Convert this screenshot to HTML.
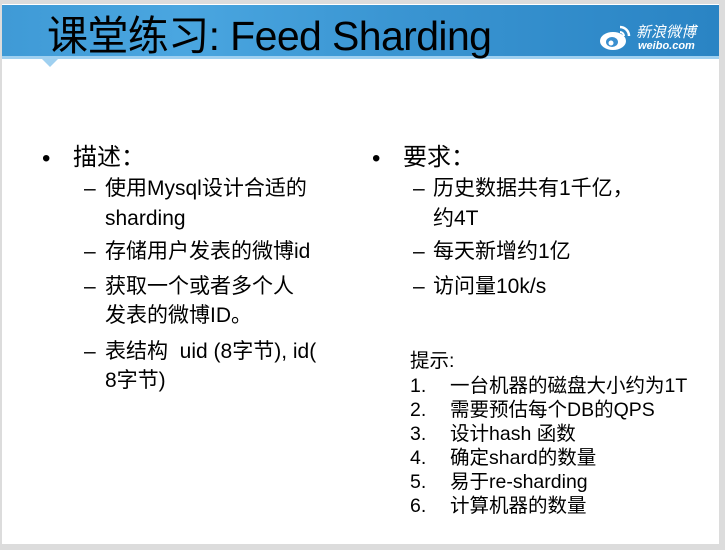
<!DOCTYPE html>
<html><head><meta charset="utf-8"><style>
body{margin:0;width:725px;height:550px;background:#dcdcdc;position:relative;overflow:hidden;font-family:"Liberation Sans","Noto Sans CJK SC",sans-serif;color:#000}
#slide{position:absolute;left:2px;top:4px;width:717px;height:540px;background:#fff}
#hdr{position:absolute;left:0;top:1px;width:717px;height:51px;background:linear-gradient(90deg,#3f9ad6 0%,#4aa6e0 25%,#3a95d2 55%,#2a84c4 100%)}
#line{position:absolute;left:0;top:52px;width:717px;height:3px;background:#9fd0f0}
#notch{position:absolute;left:40px;top:55px;width:0;height:0;border-left:8px solid transparent;border-right:8px solid transparent;border-top:8px solid #9fd0f0}
.t{position:absolute;white-space:nowrap;line-height:1}
#title{left:45px;top:12px;font-size:41px;font-family:"Liberation Sans","WenQuanYi Zen Hei",sans-serif;letter-spacing:-0.6px}
.b{font-size:24px}
.s{font-size:21px}
.h{font-size:19.5px}
</style></head><body>
<div id="slide">
<div id="hdr"></div><div id="line"></div><div id="notch"></div>
<div class="t" id="title">课堂练习: Feed Sharding</div>
<svg class="t" style="left:596px;top:18px" width="36" height="30" viewBox="0 0 36 30"><ellipse cx="15" cy="19" rx="13" ry="9" fill="#fff"/><ellipse cx="14" cy="20" rx="6" ry="5" fill="#3a8fcf"/><circle cx="13" cy="21" r="2.5" fill="#fff"/><path d="M22 5a9 9 0 0 1 9 9" stroke="#fff" stroke-width="2.5" fill="none"/><path d="M22 10a4 4 0 0 1 4 4" stroke="#fff" stroke-width="2" fill="none"/></svg>
<div class="t" style="left:634px;top:21px;color:#fff;font-size:15px;font-style:italic">新浪微博</div>
<div class="t" style="left:636px;top:37px;color:#fff;font-size:11px;font-style:italic;font-weight:bold">weibo.com</div>

<div class="t b" style="left:40px;top:143px">•</div>
<div class="t b" style="left:71px;top:142px">描述：</div>
<div class="t s" style="left:82px;top:174px">–</div><div class="t s" style="left:103px;top:174px">使用Mysql设计合适的</div>
<div class="t s" style="left:103px;top:204px">sharding</div>
<div class="t s" style="left:82px;top:237px">–</div><div class="t s" style="left:103px;top:237px">存储用户发表的微博id</div>
<div class="t s" style="left:82px;top:272px">–</div><div class="t s" style="left:103px;top:272px">获取一个或者多个人</div>
<div class="t s" style="left:103px;top:301px">发表的微博ID。</div>
<div class="t s" style="left:82px;top:337px">–</div><div class="t s" style="left:103px;top:337px">表结构&nbsp; uid (8字节), id(</div>
<div class="t s" style="left:103px;top:366px">8字节)</div>

<div class="t b" style="left:370px;top:143px">•</div>
<div class="t b" style="left:401px;top:142px">要求：</div>
<div class="t s" style="left:411px;top:174px">–</div><div class="t s" style="left:431px;top:174px">历史数据共有1千亿，</div>
<div class="t s" style="left:431px;top:204px">约4T</div>
<div class="t s" style="left:411px;top:237px">–</div><div class="t s" style="left:431px;top:237px">每天新增约1亿</div>
<div class="t s" style="left:411px;top:272px">–</div><div class="t s" style="left:431px;top:272px">访问量10k/s</div>

<div class="t h" style="left:408px;top:348px">提示:</div>
<div class="t h" style="left:408px;top:373px">1.</div><div class="t h" style="left:448px;top:373px">一台机器的磁盘大小约为1T</div>
<div class="t h" style="left:408px;top:397px">2.</div><div class="t h" style="left:448px;top:397px">需要预估每个DB的QPS</div>
<div class="t h" style="left:408px;top:421px">3.</div><div class="t h" style="left:448px;top:421px">设计hash 函数</div>
<div class="t h" style="left:408px;top:445px">4.</div><div class="t h" style="left:448px;top:445px">确定shard的数量</div>
<div class="t h" style="left:408px;top:469px">5.</div><div class="t h" style="left:448px;top:469px">易于re-sharding</div>
<div class="t h" style="left:408px;top:493px">6.</div><div class="t h" style="left:448px;top:493px">计算机器的数量</div>
</div>
</body></html>
